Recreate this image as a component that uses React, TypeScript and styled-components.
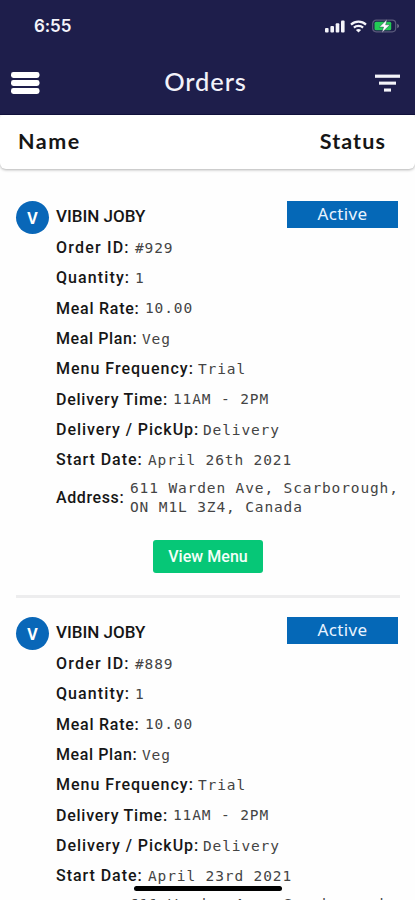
import React from "react";
import styled, { createGlobalStyle } from "styled-components";

const GlobalStyle = createGlobalStyle`
  * { box-sizing: border-box; }
  body { margin: 0; background: #fff; }
`;

const Screen = styled.div`
  position: relative;
  width: 415px;
  height: 900px;
  overflow: hidden;
  background: #fefefe;
  color: #161616;
  font-family: Roboto, sans-serif;
`;

const Header = styled.header`
  height: 115px;
  background: #1e1e4b;
  border-bottom: 1px solid #12123e;
  color: #fff;
`;

const StatusBar = styled.div`
  display: flex;
  justify-content: space-between;
  align-items: center;
  height: 52px;
  padding: 0 15px 0 34px;
`;

const Clock = styled.span`
  font: 600 17px/20px Inter, sans-serif;
  letter-spacing: -0.1px;
  color: #f4f4fa;
`;

const StatusIcons = styled.div`
  display: flex;
  align-items: center;
  gap: 5px;
`;

const NavBar = styled.div`
  display: grid;
  grid-template-columns: 40px 1fr 40px;
  align-items: center;
  height: 62px;
  padding: 0 15px 0 11px;
`;

const IconButton = styled.button<{ $end?: boolean }>`
  display: flex;
  justify-content: ${(p) => (p.$end ? "flex-end" : "flex-start")};
  padding: 0;
  border: 0;
  background: none;
`;

const Title = styled.h1`
  margin: 0;
  padding: 0 0 4px;
  text-align: center;
  font: 500 25.5px/32px Lato, sans-serif;
  letter-spacing: 0.9px;
  color: #f2f2fa;
`;

const ColumnBar = styled.div`
  display: flex;
  justify-content: space-between;
  align-items: center;
  height: 54px;
  padding: 0 29px 2px 18px;
  border-radius: 3px 3px 6px 6px;
  background: #fff;
  box-shadow: 0 1px 3px rgba(0, 0, 0, 0.3);
`;

const ColumnName = styled.span<{ $spacing: number }>`
  font: 700 21.5px/26px Lato, sans-serif;
  letter-spacing: ${(p) => p.$spacing}px;
`;

const OrderList = styled.main`
  padding: 32px 15px 0 16px;
`;

const OrderCard = styled.article`
  display: grid;
  grid-template-columns: 40px 1fr;
  grid-template-rows: 32px 307px 33px;
  height: 397px;
  margin-bottom: 19px;
  border-bottom: 3px solid #ededee;
`;

const Avatar = styled.div`
  display: flex;
  align-items: center;
  justify-content: center;
  width: 33px;
  height: 33px;
  border-radius: 50%;
  background: #0967b8;
  color: #fff;
  font: 700 16px/20px "Open Sans", sans-serif;
`;

const CardHead = styled.div`
  display: flex;
  justify-content: space-between;
  padding-right: 2px;
`;

const Customer = styled.h2`
  margin: 0;
  font: 500 17px/31px Roboto, sans-serif;
`;

const StatusTag = styled.span`
  width: 111px;
  height: 27px;
  background: #0568b7;
  color: #e9f4ff;
  font: 400 17px/25px "Noto Sans", sans-serif;
  letter-spacing: 0.4px;
  text-align: center;
`;

const Details = styled.dl`
  grid-column: 2;
  margin: 0;
`;

const Detail = styled.div<{ $tall?: boolean }>`
  display: flex;
  align-items: center;
  height: ${(p) => (p.$tall ? 45 : 30.3)}px;
`;

const Label = styled.dt<{ $width: number; $spacing: number }>`
  flex: none;
  width: ${(p) => p.$width}px;
  font: 500 16px/20px Roboto, sans-serif;
  letter-spacing: ${(p) => p.$spacing}px;
  white-space: nowrap;
`;

const Value = styled.dd`
  margin: 0;
  font: 400 14.5px/18.5px "DejaVu Sans Mono", monospace;
  letter-spacing: 0.87px;
  white-space: pre;
  color: #444;
`;

const MenuButton = styled.button`
  grid-column: 1 / -1;
  justify-self: center;
  width: 110px;
  height: 33px;
  padding: 0;
  border: 0;
  border-radius: 3px;
  background: #06c777;
  color: #f3fff9;
  font: 500 16px/33px Roboto, sans-serif;
  letter-spacing: 0.05px;
`;

const HomeIndicator = styled.div`
  position: absolute;
  left: 134px;
  top: 886px;
  width: 148px;
  height: 5px;
  border-radius: 3px;
  background: #000;
`;

const SignalIcon = () => (
  <svg width="20" height="13" viewBox="0 0 20 13" fill="#f4f4fa">
    <rect x="0" y="8" width="3.6" height="4.6" rx="1" />
    <rect x="5.4" y="6" width="3.6" height="6.6" rx="1" />
    <rect x="10.7" y="3.3" width="3.6" height="9.3" rx="1" />
    <rect x="16" y="0.4" width="3.6" height="12.2" rx="1" />
  </svg>
);

const WifiIcon = () => (
  <svg width="17" height="13" viewBox="0 0 17 13" fill="none" stroke="#f4f4fa" strokeWidth="2.2">
    <path d="M1 4.6C5.2.7 11.8.7 16 4.6" />
    <path d="M3.9 7.6c2.6-2.3 6.6-2.3 9.2 0" />
    <path d="M8.5 12.5 5.9 9.9c1.5-1.3 3.7-1.3 5.2 0z" fill="#f4f4fa" stroke="none" />
  </svg>
);

const BatteryIcon = () => (
  <svg width="28" height="14" viewBox="0 0 28 14">
    <rect x="0.7" y="1.2" width="23" height="11.6" rx="3.5" fill="none" stroke="#5b5b7c" strokeWidth="1.2" />
    <path d="M25.3 4.8v4.4q1.7-.7 1.7-2.2t-1.7-2.2z" fill="#77778f" />
    <rect x="2.5" y="2.8" width="16.7" height="8.4" rx="1.5" fill="#23cb55" />
    <path d="M15.2.3 7.4 8h4.2L9.8 13.7l8.2-7.9h-4.4z" fill="#fff" stroke="#1e1e4b" strokeWidth="0.4" />
  </svg>
);

const MenuIcon = () => (
  <svg width="29" height="24" viewBox="0 0 29 24" fill="#fff">
    <rect y="1" width="28.5" height="6" rx="2.4" />
    <rect y="9" width="28.5" height="6" rx="2.4" />
    <rect y="17" width="28.5" height="6" rx="2.4" />
  </svg>
);

const FilterIcon = () => (
  <svg width="25" height="19" viewBox="0 0 25 19" fill="#f4f4fa">
    <rect y="0.6" width="25" height="3.2" />
    <rect x="4" y="7.6" width="17" height="3.1" />
    <rect x="9" y="14.5" width="7" height="3.1" />
  </svg>
);

type Field = { label: string; value: string; width: number; spacing: number; tall?: boolean };

const orderFields = (id: string, start: string): Field[] => [
  { label: "Order ID:", value: id, width: 79, spacing: 1.2 },
  { label: "Quantity:", value: "1", width: 79, spacing: 1.1 },
  { label: "Meal Rate:", value: "10.00", width: 89, spacing: 0.75 },
  { label: "Meal Plan:", value: "Veg", width: 86, spacing: 0.6 },
  { label: "Menu Frequency:", value: "Trial", width: 142, spacing: 1 },
  { label: "Delivery Time:", value: "11AM - 2PM", width: 117, spacing: 0.75 },
  { label: "Delivery / PickUp:", value: "Delivery", width: 147, spacing: 0.95 },
  { label: "Start Date:", value: start, width: 92, spacing: 0.95 },
  {
    label: "Address:",
    value: "611 Warden Ave, Scarborough,\nON M1L 3Z4, Canada",
    width: 74,
    spacing: 0.6,
    tall: true,
  },
];

const orders = [
  { id: "#929", start: "April 26th 2021" },
  { id: "#889", start: "April 23rd 2021" },
];

export default function App() {
  return (
    <Screen>
      <GlobalStyle />
      <Header>
        <StatusBar>
          <Clock>6:55</Clock>
          <StatusIcons>
            <SignalIcon />
            <WifiIcon />
            <BatteryIcon />
          </StatusIcons>
        </StatusBar>
        <NavBar>
          <IconButton aria-label="Menu">
            <MenuIcon />
          </IconButton>
          <Title>Orders</Title>
          <IconButton $end aria-label="Filter">
            <FilterIcon />
          </IconButton>
        </NavBar>
      </Header>
      <ColumnBar>
        <ColumnName $spacing={1.5}>Name</ColumnName>
        <ColumnName $spacing={1.1}>Status</ColumnName>
      </ColumnBar>
      <OrderList>
        {orders.map((order) => (
          <OrderCard key={order.id}>
            <Avatar>V</Avatar>
            <CardHead>
              <Customer>VIBIN JOBY</Customer>
              <StatusTag>Active</StatusTag>
            </CardHead>
            <Details>
              {orderFields(order.id, order.start).map((field) => (
                <Detail key={field.label} $tall={field.tall}>
                  <Label $width={field.width} $spacing={field.spacing}>
                    {field.label}
                  </Label>
                  <Value>{field.value}</Value>
                </Detail>
              ))}
            </Details>
            <MenuButton>View Menu</MenuButton>
          </OrderCard>
        ))}
      </OrderList>
      <HomeIndicator />
    </Screen>
  );
}
